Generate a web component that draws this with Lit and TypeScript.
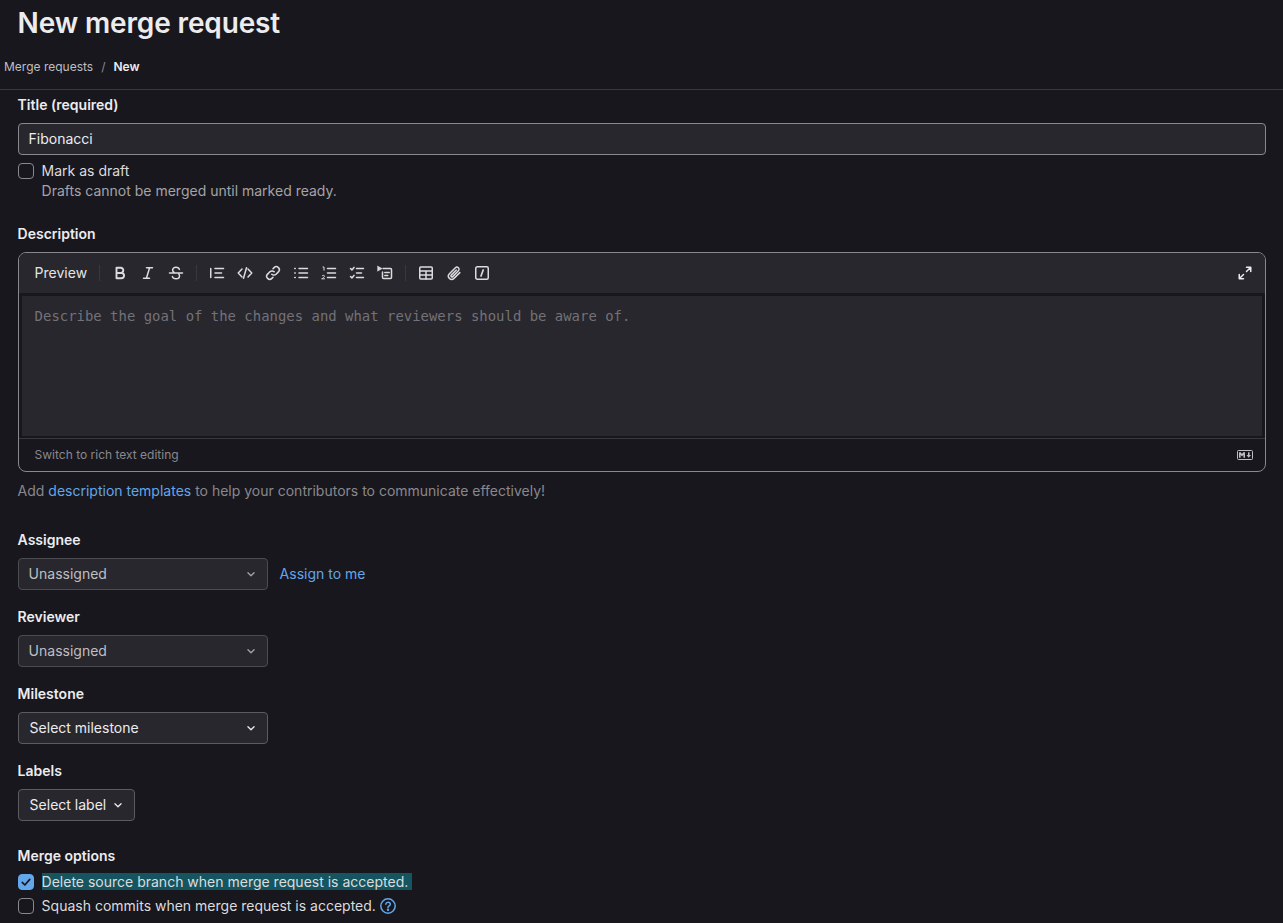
import { LitElement, html, css, svg } from "lit";
import { customElement } from "lit/decorators.js";

const icon = (content: unknown, cls = "ico") =>
  html`<svg class=${cls} viewBox="0 0 16 16" fill="none" stroke="currentColor" stroke-width="1.5" stroke-linecap="round" stroke-linejoin="round">${content}</svg>`;

const chevron = icon(svg`<path d="M4.5 6.5 8 10l3.5-3.5"/>`, "chev");

const tools1 = [
  svg`<path d="M4.5 2.75h4.2a2.6 2.6 0 0 1 0 5.2H4.5zM4.5 7.95h4.9a2.65 2.65 0 0 1 0 5.3H4.5z" stroke-width="1.9"/>`,
  svg`<path d="M6.5 2.75h6M3.5 13.25h6M9.6 2.75 6.4 13.25"/>`,
  svg`<path d="M1.5 8h13M11.4 4.4C11 3 9.7 2.2 8 2.2c-2 0-3.4 1.1-3.4 2.8 0 1 .5 1.8 1.5 2.4M4.4 11.6c.4 1.4 1.8 2.2 3.6 2.2 2 0 3.5-1.1 3.5-2.8 0-.7-.2-1.3-.6-1.8"/>`,
];
const tools2 = [
  svg`<path d="M1.75 3.5v9M6 3.5h8.5M6 8h6.5M6 12.5h8.5"/>`,
  svg`<path d="M5 4 1.25 8 5 12M11 4l3.75 4L11 12M9.5 2.75l-3 10.5"/>`,
  svg`<path d="M6.8 9.2a3 3 0 0 0 4.3 0l2.3-2.3a3 3 0 0 0-4.3-4.3L8 3.7M9.2 6.8a3 3 0 0 0-4.3 0L2.6 9.1a3 3 0 0 0 4.3 4.3L8 12.3"/>`,
  svg`<path d="M6 3.5h8.5M6 8h8.5M6 12.5h8.5M1.75 3.5h.5M1.75 8h.5M1.75 12.5h.5" />`,
  svg`<path d="M6.5 3.5h8M6.5 8h8M6.5 12.5h8"/><path d="M2 2h1v3.2M1 13.8h2.6M1.2 10.8c.5-.8 2.3-.7 2.3.4 0 .9-1.8 1.6-2.5 2.6" stroke-width="1"/>`,
  svg`<path d="M7.5 3.5h7M7.5 8h5M7.5 12.5h7M1.5 3.5l1.4 1.4L5 2.4M1.5 11.5l1.4 1.4L5 10.4"/>`,
  svg`<path d="M6 3.5h7.5a1 1 0 0 1 1 1v8a1 1 0 0 1-1 1h-7a1 1 0 0 1-1-1V7M7.8 7.5h4.4M7.8 10.5h3"/><path d="M.8 1.2 5 3.6.8 6z" fill="currentColor" stroke-width=".6"/>`,
];
const tools3 = [
  svg`<rect x="1.75" y="2" width="12.5" height="12" rx="1"/><path d="M1.75 6h12.5M1.75 10h12.5M8 6v8"/>`,
  svg`<path d="M13.8 7.6 8 13.4a3.2 3.2 0 0 1-4.6-4.6l6-6a2.1 2.1 0 0 1 3 3l-5.7 5.8a1 1 0 0 1-1.5-1.5L10.3 5"/>`,
  svg`<rect x="1.75" y="1.75" width="12.5" height="12.5" rx="1.5"/><path d="M9.2 5 7 11" stroke-width="1.7"/>`,
];

@customElement("app-root")
export class AppRoot extends LitElement {
  static styles = css`
    :host {
      display: block;
      height: 923px;
      overflow: hidden;
      background: #18171d;
      color: #ececef;
      font-family: Inter, "Liberation Sans", sans-serif;
      font-size: 14px;
      line-height: 20px;
    }
    * { box-sizing: border-box; }
    h1 {
      margin: 0;
      padding: 3px 0 0 17.6px;
      height: 52px;
      font-size: 28px;
      line-height: 40px;
      font-weight: 600;
      letter-spacing: -0.14px;
      color: #ececef;
    }
    .crumbs {
      display: flex;
      align-items: center;
      gap: 8px;
      height: 38px;
      padding: 0 0 8px 4px;
      font-size: 12px;
      line-height: 24px;
      color: #bfbfc3;
      border-bottom: 1px solid #3a383f;
      margin-bottom: 5px;
    }
    .crumbs b { color: #ececef; font-weight: 600; }
    .crumbs i { font-style: normal; color: #89888d; }
    form { padding: 0 17px 0 17.6px; display: block; }
    label.t { display: block; font-weight: 600; line-height: 20px; height: 20px; color: #ececef; }
    .input {
      display: flex;
      align-items: center;
      margin-top: 8px;
      height: 32px;
      border: 1px solid #89888d;
      border-radius: 4px;
      background: #28272d;
      padding: 0 10px;
      color: #ececef;
    }
    .check { display: flex; gap: 8px; align-items: flex-start; }
    .box {
      flex: none;
      width: 16px;
      height: 16px;
      margin-top: 2px;
      border: 1px solid #89888d;
      border-radius: 4px;
      background: #18171d;
    }
    .box.on {
      background: #63a6e9;
      border-color: #63a6e9;
      display: flex;
      align-items: center;
      justify-content: center;
      color: #18171d;
    }
    .box.on svg { width: 12px; height: 12px; stroke-width: 2.2; }
    .draft { margin-top: 6px; color: #dcdcde; height: 40px; }
    .sub { color: #a4a3a8; display: block; }
    .desc { margin-top: 23px; }
    .editor {
      margin-top: 8px;
      height: 220px;
      border: 1px solid #89888d;
      border-radius: 8px;
      display: flex;
      flex-direction: column;
      overflow: hidden;
      background: #18171d;
    }
    .bar {
      flex: none;
      height: 41px;
      background: #28272d;
      border-bottom: 1px solid #18171d;
      display: flex;
      align-items: center;
      padding: 0 12px 0 16px;
      color: #ececef;
    }
    .preview { font-size: 14px; margin-right: 12px; color: #e4e4e6; }
    .sep { width: 1px; height: 16px; background: #3a383f; flex: none; }
    .group { display: flex; align-items: center; gap: 12px; padding: 0 12px; color: #dcdcde; }
    .ico { width: 16px; height: 16px; flex: none; display: block; }
    .grow { flex: 1; }
    .text {
      flex: none;
      height: 140px;
      margin: 2px 3px 0;
      background: #28272d;
      padding: 10px 13px;
      font-family: "DejaVu Sans Mono", "Liberation Mono", monospace;
      font-size: 13.95px;
      line-height: 20px;
      color: #737278;
    }
    .foot {
      flex: 1;
      display: flex;
      align-items: center;
      justify-content: space-between;
      border-top: 1px solid #3a383f;
      margin-top: 2px;
      padding: 0 12px 0 16px;
      font-size: 12px;
      color: #89888d;
    }
    .md { width: 16px; height: 10px; display: block; color: #bfbfc3; }
    .hint { margin-top: 9px; color: #89888d; height: 20px; }
    a { color: #63a6e9; text-decoration: none; }
    .assignee { margin-top: 29px; }
    .field { margin-top: 17px; }
    .row { display: flex; align-items: center; gap: 12px; margin-top: 8px; }
    .select {
      width: 250px;
      height: 32px;
      border: 1px solid #4c4b51;
      border-radius: 4px;
      background: #28272d;
      display: flex;
      align-items: center;
      justify-content: space-between;
      padding: 0 8px 0 10px;
      color: #bfbfc3;
    }
    .select .chev { color: #a4a3a8; }
    .select.active { color: #ececef; border-color: #5c5b61; padding-left: 11px; }
    .select.active .chev { color: #ececef; }
    .select.fit { width: 117px; }
    .chev { width: 14px; height: 14px; flex: none; margin-right: 1px; }
    .merge { margin-top: 25px; }
    .opts { margin-top: 6px; display: flex; flex-direction: column; gap: 4px; color: #dcdcde; }
    .sel { background: #15555f; color: #dcdcde; padding-right: 4px; }
    .help { width: 16px; height: 16px; color: #63a6e9; display: inline-block; vertical-align: -3px; }
  `;

  render() {
    return html`
      <h1>New merge request</h1>
      <div class="crumbs"><span>Merge requests</span><i>/</i><b>New</b></div>
      <form>
        <label class="t">Title (required)</label>
        <div class="input">Fibonacci</div>
        <div class="check draft">
          <span class="box"></span>
          <span>Mark as draft<span class="sub">Drafts cannot be merged until marked ready.</span></span>
        </div>
        <label class="t desc">Description</label>
        <div class="editor">
          <div class="bar">
            <span class="preview">Preview</span>
            <span class="sep"></span>
            <span class="group">${tools1.map((t) => icon(t))}</span>
            <span class="sep"></span>
            <span class="group">${tools2.map((t) => icon(t))}</span>
            <span class="sep"></span>
            <span class="group">${tools3.map((t) => icon(t))}</span>
            <span class="grow"></span>
            ${icon(svg`<path d="M9.500 2.250h4.250V6.500M13.500 2.500 9.500 6.500M6.500 13.750H2.250V9.500M2.500 13.500l4-4"/>`)}
          </div>
          <div class="text">Describe the goal of the changes and what reviewers should be aware of.</div>
          <div class="foot">
            <span>Switch to rich text editing</span>
            <svg class="md" viewBox="0 0 16 10"><rect x=".5" y=".5" width="15" height="9" rx="1" fill="none" stroke="currentColor"/><path fill="currentColor" d="M2 2.200h1.700L5 4l1.300-1.800H8v5.600H6.400V4.700L5 6.400 3.600 4.700v3.100H2zM11 2.200h1.500v2.700h1.500L11.750 7.800 9.500 4.900H11z"/></svg>
          </div>
        </div>
        <div class="hint">Add <a>description templates</a> to help your contributors to communicate effectively!</div>
        <label class="t assignee">Assignee</label>
        <div class="row"><div class="select"><span>Unassigned</span>${chevron}</div><a>Assign to me</a></div>
        <div class="field">
          <label class="t">Reviewer</label>
          <div class="row"><div class="select"><span>Unassigned</span>${chevron}</div></div>
        </div>
        <div class="field">
          <label class="t">Milestone</label>
          <div class="row"><div class="select active"><span>Select milestone</span>${chevron}</div></div>
        </div>
        <div class="field">
          <label class="t">Labels</label>
          <div class="row"><div class="select active fit"><span>Select label</span>${chevron}</div></div>
        </div>
        <label class="t merge">Merge options</label>
        <div class="opts">
          <div class="check">
            <span class="box on">${icon(svg`<path d="M3 8.500 6.500 12 13 4.500"/>`)}</span>
            <div><span class="sel">Delete source branch when merge request is accepted.</span></div>
          </div>
          <div class="check">
            <span class="box"></span>
            <span>Squash commits when merge request is accepted.
              <svg class="help" viewBox="0 0 16 16" fill="none" stroke="currentColor" stroke-width="1.500" stroke-linecap="round"><circle cx="8" cy="8" r="7.200"/><path d="M5.800 6.200C6 5 7 4.300 8.100 4.300c1.300 0 2.200.8 2.200 1.900 0 1.700-2.300 1.700-2.300 3.300"/><circle cx="8" cy="11.700" r=".5" fill="currentColor"/></svg>
            </span>
          </div>
        </div>
      </form>
    `;
  }
}
